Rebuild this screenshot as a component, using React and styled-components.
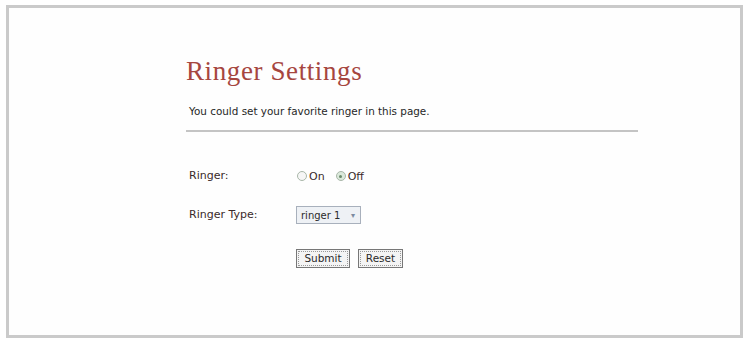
import React from "react";
import styled, { createGlobalStyle } from "styled-components";

const Global = createGlobalStyle`
  html, body { margin: 0; padding: 0; background: #ffffff; }
  #root { width: 748px; height: 340px; }
`;

const Frame = styled.div`
  box-sizing: border-box;
  margin: 5px 0 0 6px;
  width: 737px;
  height: 333px;
  border: 3px solid #cacaca;
  background: #fefefe;
  padding: 48px 0 0 177px;
`;

const Title = styled.h1`
  margin: 0;
  font-family: "Liberation Serif", "Times New Roman", serif;
  font-weight: normal;
  font-size: 27px;
  line-height: 30px;
  letter-spacing: 0.6px;
  color: #a6463f;
`;

const Intro = styled.p`
  margin: 18px 0 0 3px;
  font-family: "DejaVu Sans", Verdana, sans-serif;
  font-size: 10.4px;
  line-height: 14px;
  color: #262626;
`;

const Rule = styled.hr`
  margin: 12px 0 0 0;
  width: 452px;
  height: 2px;
  border: 0;
  background: #c4c4c4;
`;

const Form = styled.form`
  margin: 35px 0 0 3px;
  display: grid;
  grid-template-columns: 107px auto;
  grid-auto-rows: 18px;
  row-gap: 21px;
  align-items: center;
  font-family: "DejaVu Sans", Verdana, sans-serif;
  font-size: 11px;
  color: #3a2a2a;
`;

const Label = styled.span`
  line-height: 18px;
`;

const Field = styled.div`
  display: flex;
  align-items: center;
  gap: ${(p) => p.$gap || 0}px;
  margin-top: ${(p) => p.$push || 0}px;
`;

const RadioOpt = styled.label`
  display: flex;
  align-items: center;
  gap: 2px;
  margin-right: 10px;
`;

const Radio = styled.span`
  box-sizing: border-box;
  width: 10px;
  height: 10px;
  margin-left: 1px;
  border-radius: 50%;
  border: 1px solid #a9b7a9;
  background: ${(p) => (p.$on ? "#dbe9db" : "#f6f6f6")};
  display: flex;
  align-items: center;
  justify-content: center;
  &::after {
    content: "";
    width: 3px;
    height: 3px;
    border-radius: 50%;
    background: ${(p) => (p.$on ? "#6a8a6a" : "transparent")};
  }
`;

const Select = styled.div`
  box-sizing: border-box;
  display: flex;
  align-items: center;
  height: 18px;
  width: 65px;
  border: 1px solid #a8b0bc;
  background: #eef1f5;
  padding-left: 4px;
  font-size: 10px;
  color: #2a2a2a;
`;

const Arrow = styled.span`
  margin-left: auto;
  width: 14px;
  height: 14px;
  display: flex;
  align-items: center;
  justify-content: center;
  color: #7c8aa0;
  font-size: 8px;
`;

const Button = styled.button`
  box-sizing: border-box;
  height: 19px;
  width: ${(p) => p.$w}px;
  padding: 0;
  border: 1px solid #777;
  outline: 1px dotted #999;
  outline-offset: -3px;
  background: #f4f4f4;
  font-family: "DejaVu Sans", Verdana, sans-serif;
  font-size: 10.5px;
  color: #2a2a2a;
`;

export default function App() {
  return (
    <>
      <Global />
      <Frame>
        <Title>Ringer Settings</Title>
        <Intro>You could set your favorite ringer in this page.</Intro>
        <Rule />
        <Form onSubmit={(e) => e.preventDefault()}>
          <Label>Ringer:</Label>
          <Field>
            <RadioOpt>
              <Radio />
              On
            </RadioOpt>
            <RadioOpt>
              <Radio $on />
              Off
            </RadioOpt>
          </Field>
          <Label>Ringer Type:</Label>
          <Field>
            <Select>
              ringer 1
              <Arrow>▾</Arrow>
            </Select>
          </Field>
          <span />
          <Field $gap={8} $push={8}>
            <Button $w={54} type="submit">Submit</Button>
            <Button $w={45} type="reset">Reset</Button>
          </Field>
        </Form>
      </Frame>
    </>
  );
}
